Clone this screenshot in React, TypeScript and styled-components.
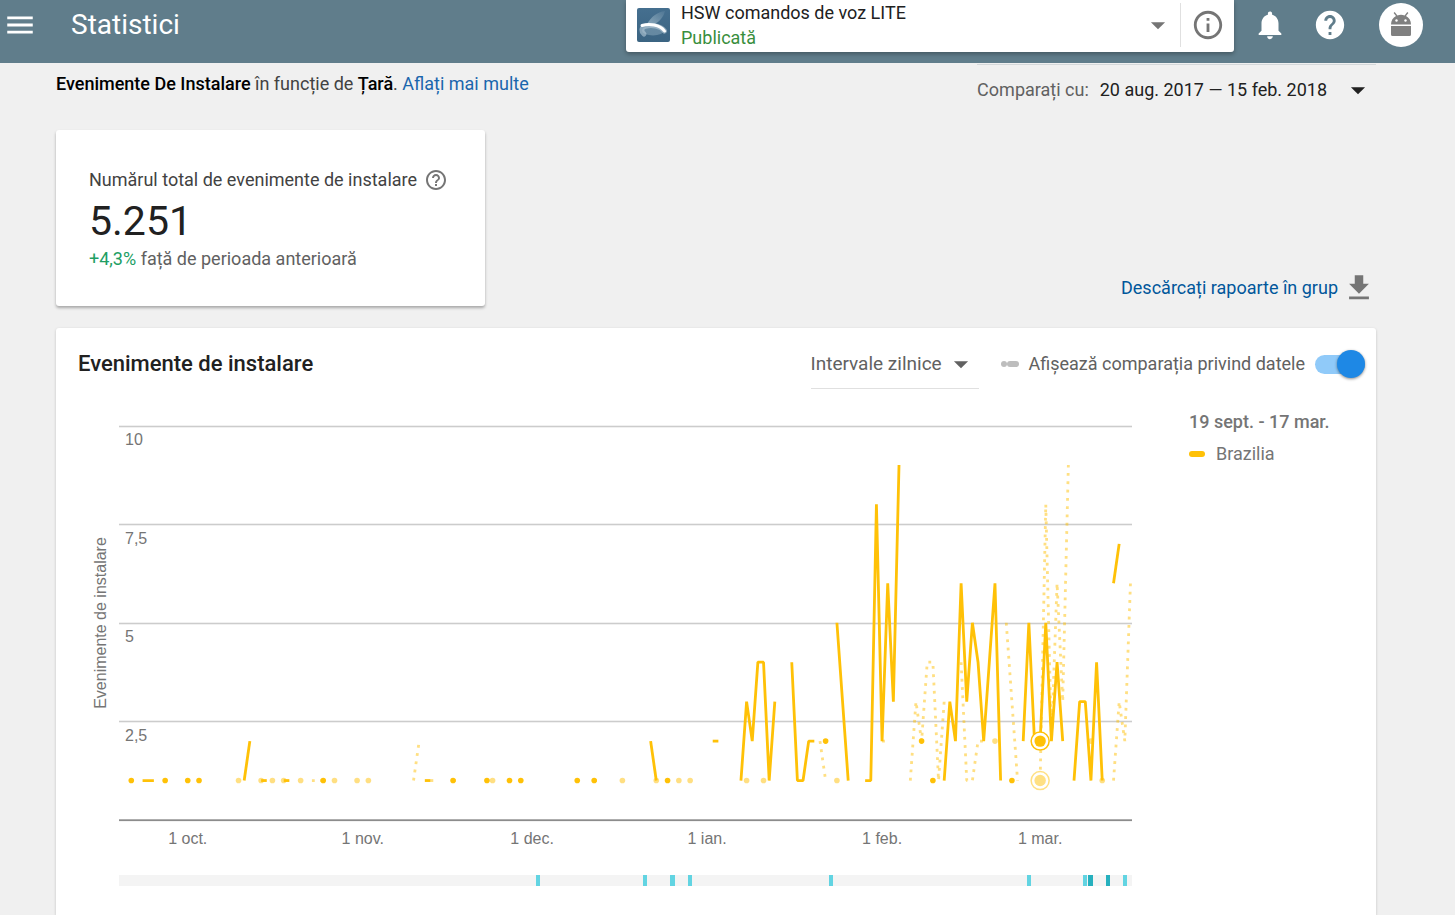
import React, { useId } from "react";
import styled, { createGlobalStyle } from "styled-components";
import {
  MdArrowDropDown,
  MdFileDownload,
  MdHelp,
  MdHelpOutline,
  MdInfoOutline,
  MdMenu,
  MdNotifications,
} from "react-icons/md";

const GlobalStyle = createGlobalStyle`
  *, *::before, *::after { box-sizing: border-box; }
  body {
    margin: 0;
    background: #f0f0f0;
    color: #212121;
    font-family: Roboto, "Liberation Sans", sans-serif;
    font-size: 18px;
    line-height: 24px;
  }
  button { font: inherit; color: inherit; background: none; border: 0; padding: 0; cursor: pointer; }
  h1, h2, p { margin: 0; }
  svg { display: block; flex: none; }
`;

const Page = styled.div`
  display: flex;
  flex-direction: column;
  min-height: 100vh;
`;

const TopBar = styled.header`
  display: flex;
  align-items: flex-start;
  height: 63px;
  padding: 0 32px 0 0;
  background: #607d8b;
  color: #fff;
`;

const BarButton = styled.button<{ $width: number }>`
  display: flex;
  align-items: center;
  justify-content: center;
  width: ${(p) => p.$width}px;
  height: 50px;
`;

const PageTitle = styled.h1`
  margin-left: 32px;
  font-size: 28px;
  font-weight: 400;
  line-height: 50px;
`;

const AppCard = styled.div`
  display: flex;
  align-items: center;
  width: 608px;
  height: 52px;
  margin-left: auto;
  padding: 0 0 2px 11px;
  background: #fff;
  border-radius: 0 0 3px 3px;
  box-shadow: 0 2px 4px rgba(0, 0, 0, 0.3);
`;

const AppPicker = styled.button`
  display: flex;
  flex: 1;
  align-items: center;
  height: 50px;
  padding-right: 5px;
  color: #757575;
  text-align: left;
`;

const AppText = styled.span`
  display: flex;
  flex: 1;
  flex-direction: column;
  margin-left: 11px;
  line-height: 25px;
`;

const AppName = styled.span`
  color: #212121;
`;

const AppStatus = styled.span`
  color: #388e3c;
`;

const InfoButton = styled.button`
  display: flex;
  align-items: center;
  justify-content: center;
  width: 54px;
  height: 44px;
  border-left: 1px solid #e0e0e0;
  color: #757575;
`;

const BarActions = styled.div`
  display: flex;
  align-items: center;
  height: 50px;
  margin-left: 6px;
`;

const Avatar = styled.button`
  display: flex;
  align-items: center;
  justify-content: center;
  width: 44px;
  height: 44px;
  margin-left: 19px;
  border-radius: 50%;
  background: #fff;
`;

const Content = styled.main`
  display: flex;
  flex: 1;
  flex-direction: column;
  padding: 0 79px 0 56px;
`;

const FilterRow = styled.div`
  display: flex;
  justify-content: space-between;
  align-items: flex-start;
`;

const Summary = styled.p`
  padding-top: 9px;
  color: #424242;

  b { color: #000; font-weight: 500; }
`;

const Link = styled.a`
  color: #1a66ad;
  text-decoration: none;
`;

const Compare = styled.div`
  display: flex;
  align-items: center;
  gap: 11px;
  margin-top: 1px;
  padding-top: 8px;
  border-top: 1px solid #d4d8da;
  color: #616161;
`;

const RangeButton = styled.button`
  display: flex;
  align-items: center;
  gap: 14px;
  padding-right: 1px;
  color: #212121;
`;

const OverviewRow = styled.div`
  display: flex;
  justify-content: space-between;
  align-items: flex-end;
  margin: 23px 0 22px;
`;

const TotalCard = styled.section`
  width: 429px;
  height: 176px;
  padding: 38px 33px 0;
  background: #fff;
  border-radius: 3px;
  box-shadow: 0 2px 3px rgba(0, 0, 0, 0.3);
`;

const TotalLabel = styled.div`
  display: flex;
  align-items: center;
  gap: 7px;
  white-space: nowrap;
  color: #424242;
`;

const HelpButton = styled.button`
  color: #757575;
`;

const TotalValue = styled.p`
  margin-top: 3px;
  font-size: 41px;
  line-height: 52px;
`;

const TotalChange = styled.p`
  color: #616161;

  span { color: #219e63; }
`;

const DownloadLink = styled.a`
  display: flex;
  align-items: center;
  gap: 4px;
  padding-bottom: 1px;
  color: #01579b;
  text-decoration: none;

  svg { color: #757575; }
`;

const Panel = styled.section`
  flex: 1;
  background: #fff;
  border-radius: 3px 3px 0 0;
  box-shadow: 0 1px 3px rgba(0, 0, 0, 0.2);
`;

const PanelHeader = styled.div`
  display: flex;
  align-items: center;
  height: 72px;
  padding: 0 11px 0 22px;
`;

const PanelTitle = styled.h2`
  margin-right: auto;
  font-size: 22px;
  font-weight: 500;
`;

const IntervalBox = styled.label`
  display: flex;
  align-items: center;
  width: 168px;
  height: 49px;
  margin-top: 1px;
  border-bottom: 1px solid #e0e0e0;
  color: #616161;
`;

const IntervalSelect = styled.select`
  width: 133px;
  padding: 0;
  border: 0;
  appearance: none;
  background: none;
  color: inherit;
  font: inherit;
  font-size: 19px;
`;

const CompareToggle = styled.label`
  display: flex;
  align-items: center;
  margin-left: 22px;
  color: #616161;
`;

const Swatch = styled.span<{ $width: number; $color: string }>`
  width: ${(p) => p.$width}px;
  height: 6px;
  border-radius: 3px;
  background: ${(p) => p.$color};
`;

const ToggleText = styled.span`
  margin: 0 10px;
`;

const Switch = styled.input`
  display: flex;
  align-items: center;
  justify-content: flex-end;
  width: 50px;
  height: 19px;
  margin: 0;
  appearance: none;
  border-radius: 10px;
  background: #90caf9;

  &::before {
    content: "";
    width: 28px;
    height: 28px;
    flex: none;
    border-radius: 50%;
    background: #1e88e5;
    box-shadow: 0 1px 3px rgba(0, 0, 0, 0.45);
  }

  &:not(:checked) { justify-content: flex-start; }
`;

const ChartRow = styled.div`
  display: flex;
  align-items: flex-start;
  padding-left: 22px;
`;

const ChartSvg = styled.svg`
  flex: 1;
  min-width: 0;
  font-family: "Liberation Sans", Arial, sans-serif;
  font-size: 16px;
`;

const Legend = styled.aside`
  width: 187px;
  margin-left: 57px;
  padding-top: 10px;
  color: #757575;
`;

const LegendTitle = styled.p`
  font-weight: 500;
`;

const LegendItem = styled.p`
  display: flex;
  align-items: center;
  gap: 11px;
  margin-top: 8px;
`;

type Point = [day: number, value: number];

/* Each run is a stretch of consecutive days; a run of one day is drawn as a dot. */
const run = (start: number, ...values: number[]): Point[] =>
  values.map((v, i) => [start + i, v]);

const CURRENT: Point[][] = [
  run(2, 1), run(4, 1, 1, 1), run(8, 1), run(12, 1), run(14, 1), run(22, 1, 2),
  run(25, 1, 1), run(29, 1, 1), run(36, 1), run(54, 1, 1), run(59, 1), run(65, 1),
  run(69, 1), run(71, 1), run(81, 1), run(84, 1), run(94, 2, 1), run(97, 1),
  run(105, 2, 2), run(110, 1, 3, 2, 4, 4, 1, 3), run(119, 4, 1, 1, 2, 2), run(125, 2),
  run(127, 5, 3, 1), run(132, 1, 1, 8, 2, 6, 3, 9), run(142, 2), run(144, 1),
  run(146, 1, 3, 2, 6, 3, 5, 4, 2, 4, 6, 1), run(158, 1),
  run(160, 2, 5, 2, 2, 5, 2, 4, 2), run(169, 1, 3, 3, 1, 4, 1), run(176, 6, 7),
];

const LAG = 30;
const LAST_DAY = 179;

const PREVIOUS: Point[][] = [
  run(21, 1), run(25, 1), run(27, 1), run(29, 1),
  ...CURRENT.map((r) =>
    r.map(([d, v]): Point => [d + LAG, v]).filter(([d]) => d <= LAST_DAY)
  ).filter((r) => r.length > 0),
];

const LEFT = 41;
const RIGHT = 1054;
const BASE = 420;
const dayX = (day: number) => 42 + day * 5.645;
const valueY = (value: number) => BASE - value * 39.45;

const GRID = [
  { value: 10, label: "10" },
  { value: 7.5, label: "7,5" },
  { value: 5, label: "5" },
  { value: 2.5, label: "2,5" },
];

const MONTHS = [
  { day: 12, label: "1 oct." },
  { day: 43, label: "1 nov." },
  { day: 73, label: "1 dec." },
  { day: 104, label: "1 ian." },
  { day: 135, label: "1 feb." },
  { day: 163, label: "1 mar." },
];

const EVENTS = [
  { x: 458, w: 4 }, { x: 565, w: 4 }, { x: 592, w: 5 }, { x: 610, w: 4 }, { x: 751, w: 4 },
  { x: 949, w: 4 }, { x: 1005, w: 4 }, { x: 1010, w: 5, dark: true },
  { x: 1028, w: 4, dark: true }, { x: 1045, w: 4 },
];

const AMBER = "#ffc107";

function Series({ runs, dotted }: { runs: Point[][]; dotted?: boolean }) {
  return (
    <g opacity={dotted ? 0.5 : 1}>
      {runs.map((r) =>
        r.length === 1 ? (
          <circle key={r[0][0]} cx={dayX(r[0][0])} cy={valueY(r[0][1])} r={2.8} fill={AMBER} />
        ) : (
          <polyline
            key={r[0][0]}
            points={r.map(([d, v]) => `${dayX(d)},${valueY(v)}`).join(" ")}
            fill="none"
            stroke={AMBER}
            strokeWidth={2.8}
            strokeDasharray={dotted ? "2.8 5.5" : undefined}
            strokeLinejoin="bevel"
          />
        )
      )}
    </g>
  );
}

function Marker({ day, value, color }: { day: number; value: number; color: string }) {
  const at = { cx: dayX(day), cy: valueY(value) };
  return (
    <g>
      <circle {...at} r={9} fill="#fff" stroke={color} strokeWidth={1.5} />
      <circle {...at} r={5.7} fill={color} />
    </g>
  );
}

function InstallChart() {
  return (
    <ChartSvg viewBox="0 0 1054 515" role="img" aria-label="Evenimente de instalare">
      {GRID.map((g) => (
        <g key={g.label}>
          <rect x={LEFT} y={Math.round(valueY(g.value)) - 0.3} width={RIGHT - LEFT} height={1.6} fill="#ccc" />
          <text x={47} y={valueY(g.value) + 19.500} fill="#757575">{g.label}</text>
        </g>
      ))}
      <text transform="translate(28 223) rotate(-90)" textAnchor="middle" fill="#757575">
        Evenimente de instalare
      </text>
      <rect x={LEFT} y={BASE - 0.7} width={RIGHT - LEFT} height={1.8} fill="#8c8c8c" />
      <Series runs={CURRENT} />
      <Series runs={PREVIOUS} dotted />
      <Marker day={163} value={2} color={AMBER} />
      <Marker day={163} value={1} color="#ffe083" />
      {MONTHS.map((m) => (
        <text key={m.label} x={dayX(m.day)} y={444} textAnchor="middle" fill="#757575">{m.label}</text>
      ))}
      <rect x={LEFT} y={475} width={RIGHT - LEFT} height={11} fill="#f4f4f4" />
      {EVENTS.map((e) => (
        <rect key={e.x} x={e.x} y={475} width={e.w} height={11} fill={e.dark ? "#26b0be" : "#62d4e2"} />
      ))}
    </ChartSvg>
  );
}

function AppLogo() {
  const id = useId();
  return (
    <svg width="33" height="34" viewBox="0 0 33 34" aria-hidden="true">
      <defs>
        <linearGradient id={`${id}bg`} x1="0" y1="0" x2="0" y2="1">
          <stop offset="0" stopColor="#456f8f" />
          <stop offset="1" stopColor="#3b6482" />
        </linearGradient>
        <linearGradient id={`${id}ray`} x1="0" y1="1" x2="1" y2="0">
          <stop offset="0" stopColor="#a9c1d0" stopOpacity=".7" />
          <stop offset="1" stopColor="#a9c1d0" stopOpacity=".1" />
        </linearGradient>
      </defs>
      <rect width="33" height="34" rx="2" fill={`url(#${id}bg)`} />
      <path d="M10 16C14 9 20 4 28 3c-1 5-5 10-10 13z" fill={`url(#${id}ray)`} />
      <ellipse cx="16" cy="22.500" rx="11" ry="5" fill="#86a5b9" opacity=".55" />
      <path d="M7 26C4 23 4 20 8 18.500c6-2.500 16-.5 19.500 4.500" fill="none" stroke="#b7ccd9" strokeWidth="5" strokeLinecap="round" opacity=".6" />
      <path d="M5 17.500c7-2 18-1 22.500 5.500" fill="none" stroke="#fff" strokeWidth="3" strokeLinecap="round" />
    </svg>
  );
}

function Robot() {
  return (
    <svg width="26" height="28" viewBox="0 0 26 28" fill="#808080" aria-hidden="true">
      <path d="M3 13.500C3 9.500 5 6.500 8 5L5.600 2 6.700 1.100l2.700 3.300c2.200-.8 5-.8 7.200 0l2.700-3.300 1.100.9L18 5c3 1.500 5 4.500 5 8.500z" />
      <path d="M3 15h20v8.500a1.500 1.500 0 0 1-1.500 1.500h-17A1.500 1.500 0 0 1 3 23.500z" />
      <circle cx="8.500" cy="9.500" r="1.200" fill="#fff" />
      <circle cx="17.500" cy="9.500" r="1.200" fill="#fff" />
    </svg>
  );
}

export default function App() {
  return (
    <Page>
      <GlobalStyle />
      <TopBar>
        <BarButton $width={39} aria-label="Meniu"><MdMenu size={34} /></BarButton>
        <PageTitle>Statistici</PageTitle>
        <AppCard>
          <AppPicker>
            <AppLogo />
            <AppText>
              <AppName>HSW comandos de voz LITE</AppName>
              <AppStatus>Publicată</AppStatus>
            </AppText>
            <MdArrowDropDown size={34} />
          </AppPicker>
          <InfoButton aria-label="Informații"><MdInfoOutline size={34} /></InfoButton>
        </AppCard>
        <BarActions>
          <BarButton $width={60} aria-label="Notificări"><MdNotifications size={34} /></BarButton>
          <BarButton $width={60} aria-label="Ajutor"><MdHelp size={34} /></BarButton>
          <Avatar aria-label="Cont"><Robot /></Avatar>
        </BarActions>
      </TopBar>

      <Content>
        <FilterRow>
          <Summary>
            <b>Evenimente De Instalare</b> în funcție de <b>Țară</b>.{" "}
            <Link href="#ajutor">Aflați mai multe</Link>
          </Summary>
          <Compare>
            <span>Comparați cu:</span>
            <RangeButton>
              20 aug. 2017 — 15 feb. 2018
              <MdArrowDropDown size={34} />
            </RangeButton>
          </Compare>
        </FilterRow>

        <OverviewRow>
          <TotalCard>
            <TotalLabel>
              Numărul total de evenimente de instalare
              <HelpButton aria-label="Detalii"><MdHelpOutline size={24} /></HelpButton>
            </TotalLabel>
            <TotalValue>5.251</TotalValue>
            <TotalChange><span>+4,3%</span> față de perioada anterioară</TotalChange>
          </TotalCard>
          <DownloadLink href="#rapoarte">
            Descărcați rapoarte în grup
            <MdFileDownload size={34} />
          </DownloadLink>
        </OverviewRow>

        <Panel>
          <PanelHeader>
            <PanelTitle>Evenimente de instalare</PanelTitle>
            <IntervalBox>
              <IntervalSelect aria-label="Interval" defaultValue="zi">
                <option value="zi">Intervale zilnice</option>
              </IntervalSelect>
              <MdArrowDropDown size={34} />
            </IntervalBox>
            <CompareToggle>
              <Swatch $width={6} $color="#bdbdbd" />
              <Swatch $width={12} $color="#bdbdbd" />
              <ToggleText>Afișează comparația privind datele</ToggleText>
              <Switch type="checkbox" role="switch" defaultChecked />
            </CompareToggle>
          </PanelHeader>
          <ChartRow>
            <InstallChart />
            <Legend>
              <LegendTitle>19 sept. - 17 mar.</LegendTitle>
              <LegendItem><Swatch $width={16} $color={AMBER} />Brazilia</LegendItem>
            </Legend>
          </ChartRow>
        </Panel>
      </Content>
    </Page>
  );
}
